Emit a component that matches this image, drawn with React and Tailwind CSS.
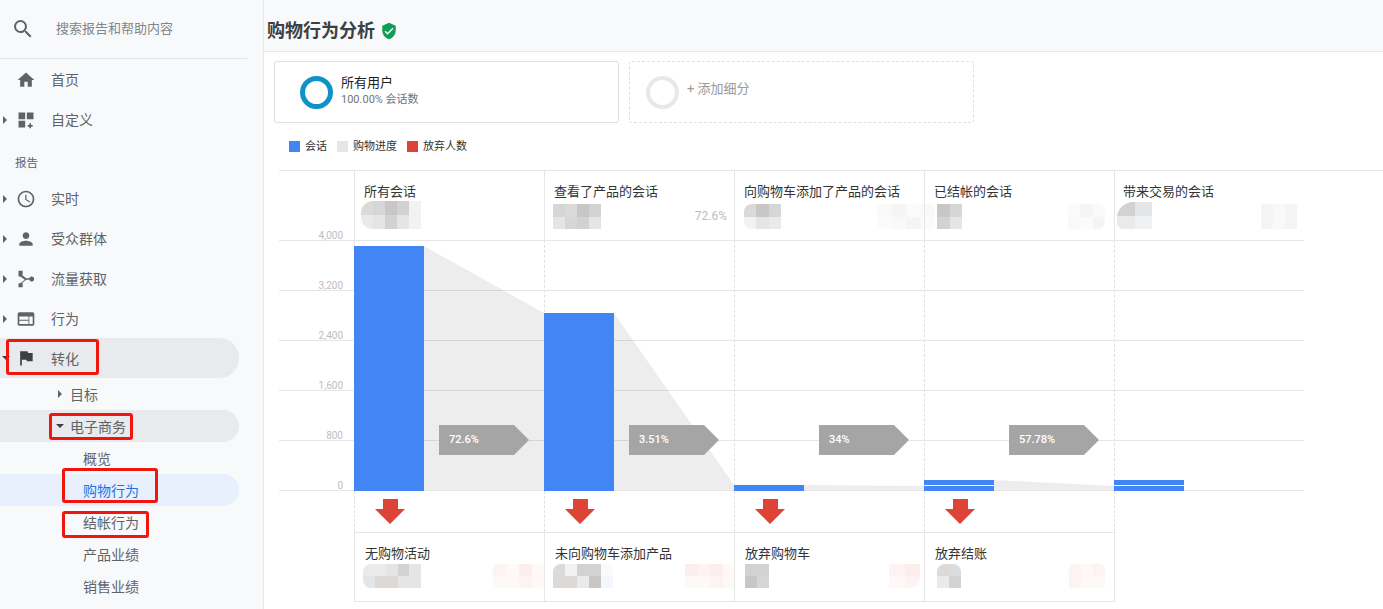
const fontStack = "font-['Roboto','Noto_Sans_CJK_SC',sans-serif]";

function Icon({d, className = "w-5 h-5 text-[#5f6368]"}) {
    return (
        <svg viewBox="0 0 24 24" className={className} fill="currentColor">
            <path d={d}/>
        </svg>
    );
}

const icons = {
    search: "M15.5 14h-.79l-.28-.27A6.47 6.47 0 0 0 16 9.5 6.5 6.5 0 1 0 9.5 16c1.61 0 3.09-.59 4.23-1.57l.27.28v.79l5 4.99L20.49 19l-4.99-5zm-6 0C7.01 14 5 11.99 5 9.5S7.01 5 9.5 5 14 7.01 14 9.5 11.99 14 9.5 14z",
    home: "M10 20v-6h4v6h5v-8h3L12 3 2 12h3v8z",
    custom: "M3 3h8v8H3zm10 0h8v8h-8zM3 13h8v8H3zm15 3h-2v2h-2v2h2v2h2v-2h2v-2h-2z",
    clock: "M11.99 2C6.47 2 2 6.48 2 12s4.47 10 9.99 10C17.52 22 22 17.52 22 12S17.52 2 11.99 2zM12 20c-4.42 0-8-3.58-8-8s3.58-8 8-8 8 3.58 8 8-3.58 8-8 8zm.5-13H11v6l5.25 3.15.75-1.23-4.5-2.67z",
    person: "M12 12c2.21 0 4-1.79 4-4s-1.79-4-4-4-4 1.79-4 4 1.79 4 4 4zm0 2c-2.67 0-8 1.34-8 4v2h16v-2c0-2.66-5.33-4-8-4z",
    acquisition: "M3 2h5v5H6.9l5.3 4H16a3 3 0 1 1 0 2h-3.8l-5.3 4H8v5H3v-5h2.2l5.3-4-5.3-4H3z",
    web: "M20 4H4c-1.1 0-1.99.9-1.99 2L2 18c0 1.1.9 2 2 2h16c1.1 0 2-.9 2-2V6c0-1.1-.9-2-2-2zm-5 14H4v-4h11v4zm0-5H4V9h11v4zm5 5h-4V9h4v9z",
    flag: "M14.4 6L14 4H5v17h2v-7h5.6l.4 2h7V6z",
    shield: "M12 1L3 5v6c0 5.55 3.84 10.74 9 12 5.16-1.26 9-6.45 9-12V5l-9-4zm-2 16l-4-4 1.41-1.41L10 14.17l6.59-6.59L18 9l-8 8z",
};

function CaretRight({className = "text-[#5f6368]"}) {
    return <span className={"block w-0 h-0 border-y-[4px] border-y-transparent border-l-[4px] border-l-current " + className}/>;
}

function CaretDown() {
    return <span className="block w-0 h-0 border-x-[4px] border-x-transparent border-t-[4px] border-t-[#3c4043]"/>;
}

function RedBox({className}) {
    return <div className={"absolute border-[3px] border-[#f0160e] rounded-[3px] pointer-events-none " + className}/>;
}

function TopItem({icon, label, caret = true}) {
    return (
        <div className="h-10 flex items-center">
            <div className="w-[16px] pl-[3px]">{caret && <CaretRight/>}</div>
            <Icon d={icon}/>
            <span className="ml-[15px] text-[14px] leading-4 text-[#5f6368]">{label}</span>
        </div>
    );
}

function Sidebar() {
    return (
        <div className="w-[263px] shrink-0 h-full bg-[#f8f9fb]">
            <div className="w-[247px] h-[59px] border-b border-[#e3e5e8] flex items-center pb-px">
                <Icon d={icons.search} className="ml-[11px] w-6 h-6 text-[#5f6368]"/>
                <span className="ml-[21px] text-[13px] text-[#80868b]">搜索报告和帮助内容</span>
            </div>
            <div className="pt-px">
                <TopItem icon={icons.home} label="首页" caret={false}/>
                <TopItem icon={icons.custom} label="自定义"/>
                <div className="h-[39px] pl-[15px] pt-[15px] text-[11.5px] leading-[16px] text-[#5f6368]">报告</div>
                <TopItem icon={icons.clock} label="实时"/>
                <TopItem icon={icons.person} label="受众群体"/>
                <TopItem icon={icons.acquisition} label="流量获取"/>
                <TopItem icon={icons.web} label="行为"/>
                <div className="relative -mt-px h-10 w-[239px] rounded-r-[20px] bg-[#e8eaed] flex items-center">
                    <div className="w-[16px] pl-[2px]"><CaretDown/></div>
                    <Icon d={icons.flag} className="w-5 h-5 text-[#3c4043]"/>
                    <span className="ml-[15px] pt-[2px] text-[14px] text-[#5f6368]">转化</span>
                    <RedBox className="left-[6px] top-[1px] w-[93px] h-[36px]"/>
                </div>
                <div className="h-8 flex items-center pl-[58px]">
                    <CaretRight/>
                    <span className="ml-[8px] pt-[2px] text-[14px] text-[#5f6368]">目标</span>
                </div>
                <div className="relative h-8 w-[239px] rounded-r-[16px] bg-[#e8eaed] flex items-center pl-[56px]">
                    <CaretDown/>
                    <span className="ml-[6px] pt-[2px] text-[14px] text-[#5f6368]">电子商务</span>
                    <RedBox className="left-[49px] top-[3px] w-[84px] h-[27px]"/>
                </div>
                <div className="h-8 flex items-center pl-[83px] pt-[2px] text-[14px] text-[#5f6368]">概览</div>
                <div className="relative h-8 w-[239px] rounded-r-[16px] bg-[#e8f0fe] flex items-center pl-[83px] pt-[2px] text-[14px] text-[#1a73e8]">
                    购物行为
                    <RedBox className="left-[62px] top-[-6px] w-[96px] h-[35px]"/>
                </div>
                <div className="relative h-8 flex items-center pl-[83px] pt-[2px] text-[14px] text-[#5f6368]">
                    结帐行为
                    <RedBox className="left-[62px] top-[5px] w-[87px] h-[27px]"/>
                </div>
                <div className="h-8 flex items-center pl-[83px] pt-[2px] text-[14px] text-[#5f6368]">产品业绩</div>
                <div className="h-8 flex items-center pl-[83px] pt-[2px] text-[14px] text-[#5f6368]">销售业绩</div>
            </div>
        </div>
    );
}

function Segments() {
    return (
        <div className="flex gap-[10px] pt-[9px] pl-[10px]">
            <div className="w-[345px] h-[62px] border border-[#e0e0e0] rounded-[3px] flex items-center pl-[25px]">
                <div className="w-[33px] h-[33px] rounded-full border-[5px] border-[#0f93c7]"/>
                <div className="ml-[8px] -mt-[3px]">
                    <div className="text-[13px] leading-[16px] text-[#212121]">所有用户</div>
                    <div className="text-[11px] leading-[15px] mt-px text-[#757575]">100.00% 会话数</div>
                </div>
            </div>
            <div className="w-[345px] h-[62px] border border-dashed border-[#e0e0e0] rounded-[3px] flex items-center pl-[16px]">
                <div className="w-[33px] h-[33px] rounded-full border-[4px] border-[#e8e8e8]"/>
                <span className="ml-[8px] -mt-[6px] text-[13px] text-[#9a9a9a]">+ 添加细分</span>
            </div>
        </div>
    );
}

function Legend() {
    return (
        <div className="flex items-center mt-[18px] ml-[25px] h-[11px] text-[11px] text-[#333]">
            <div className="w-[11px] h-[11px] bg-[#4285f4]"/>
            <span className="ml-[5px] w-[32px] pt-[2px]">会话</span>
            <div className="w-[11px] h-[11px] bg-[#e6e6e6]"/>
            <span className="ml-[5px] w-[54px] pt-[2px]">购物进度</span>
            <div className="w-[11px] h-[11px] bg-[#dd4437]"/>
            <span className="ml-[5px] pt-[2px]">放弃人数</span>
        </div>
    );
}

function Mosaic({cells, className}) {
    return (
        <div className={"grid shrink-0 overflow-hidden " + className}>
            {cells.map((c, i) => <div key={i} className={c}/>)}
        </div>
    );
}

const g1 = "bg-[#dcd9d7]", g2 = "bg-[#d5d6d8]", g3 = "bg-[#c9c7c6]", g4 = "bg-[#d2d2d3]", g5 = "bg-[#eaeaea]", g6 = "bg-[#e4e5e6]", g7 = "bg-[#f2f2f2]";
const f1 = "bg-[#f9f9f9]", f2 = "bg-[#f5f5f5]", f3 = "bg-[#fbfbfb]";
const p1 = "bg-[#fdf3f2]", p2 = "bg-[#fbeeec]", p3 = "bg-[#fef8f7]";

function FunnelChart() {
    const gridLines = [0, 50, 100, 150, 200, 250];
    return (
        <svg viewBox="0 0 1025 251" className="absolute left-0 top-0 w-[1025px] h-[251px]">
            {gridLines.map(y => <rect key={y} x="0" y={y} width="1025" height="1" fill="#e6e6e6"/>)}
            <g fill="#000000" fillOpacity="0.07">
                <polygon points="145,6 265,73 265,250 145,250"/>
                <polygon points="335,73 455,245 455,250 335,250"/>
                <polygon points="525,245 645,246 645,250 525,250"/>
                <polygon points="715,240 835,246 835,250 715,250"/>
            </g>
            <g fill="#4285f4">
                <rect x="75" y="6" width="70" height="245"/>
                <rect x="265" y="73" width="70" height="178"/>
                <rect x="455" y="245" width="70" height="6"/>
                <rect x="645" y="240" width="70" height="5"/>
                <rect x="645" y="246" width="70" height="5"/>
                <rect x="835" y="240" width="70" height="5"/>
                <rect x="835" y="246" width="70" height="5"/>
            </g>
        </svg>
    );
}

function RateChip({value}) {
    return (
        <div className="relative mt-[185px] ml-[84px] w-[90px] h-[30px] bg-[#a5a5a5] [clip-path:polygon(0_0,75px_0,100%_50%,75px_100%,0_100%)] flex items-center pl-[10px] text-[11px] font-medium text-white">
            {value}
        </div>
    );
}

function DropArrow() {
    return (
        <svg viewBox="0 0 30 25" className="w-[30px] h-[25px]">
            <polygon points="8,0 23,0 23,10 30,10 15,25 0,10 8,10" fill="#dd4437"/>
        </svg>
    );
}

function Axis() {
    return (
        <div className="pr-[11px] text-right text-[10px] text-[#bdbdbd]">
            {["4,000", "3,200", "2,400", "1,600", "800", "0"].map((label, i) => (
                <div key={label} className={i === 0 ? "h-0 -translate-y-[10px] leading-[12px]" : "h-[50px] leading-[12px] pt-[40px]"}>{label}</div>
            ))}
        </div>
    );
}

const cols = "grid grid-cols-[75px_repeat(5,190px)] w-[1025px]";

function Chart() {
    return (
        <div className={"mt-[18px] ml-[15px] border-t border-[#e6e6e6] " + fontStack}>
            <div className={cols + " h-[69px]"}>
                <div/>
                <div className="border-l border-[#e6e6e6]">
                    <div className="ml-[9px] mt-[13px] text-[13px] leading-4 text-[#333]">所有会话</div>
                    <div className="flex mt-px">
                        <Mosaic className="ml-[6px] w-[60px] h-[28px] grid-cols-5 rounded-l-[12px]" cells={[g1, g2, g3, g4, g7, g5, g6, g4, g6, g7]}/>
                    </div>
                </div>
                <div className="border-l border-[#e6e6e6]">
                    <div className="ml-[9px] mt-[13px] text-[13px] leading-4 text-[#333]">查看了产品的会话</div>
                    <div className="flex items-center mt-[4px]">
                        <Mosaic className="ml-[8px] w-[48px] h-[25px] grid-cols-4" cells={[g2, g1, g3, g4, g6, g2, g4, g6]}/>
                        <span className="ml-auto mr-[7px] -mt-[2px] text-[12px] text-[#bdbdbd]">72.6%</span>
                    </div>
                </div>
                <div className="border-l border-[#e6e6e6]">
                    <div className="ml-[9px] mt-[13px] text-[13px] leading-4 text-[#333]">向购物车添加了产品的会话</div>
                    <div className="flex mt-[4px]">
                        <Mosaic className="ml-[9px] w-[37px] h-[25px] grid-cols-3 rounded-l-[8px]" cells={[g1, g3, g2, g7, g6, g5]}/>
                        <Mosaic className="ml-[96px] w-[58px] h-[25px] grid-cols-4 rounded-[6px]" cells={[f1, f2, f3, f1, f3, f1, f2, f3]}/>
                    </div>
                </div>
                <div className="border-l border-[#e6e6e6]">
                    <div className="ml-[9px] mt-[13px] text-[13px] leading-4 text-[#333]">已结帐的会话</div>
                    <div className="flex mt-[4px]">
                        <Mosaic className="ml-[12px] w-[25px] h-[25px] grid-cols-2" cells={[g3, g2, g4, g6]}/>
                        <Mosaic className="ml-[106px] w-[37px] h-[25px] grid-cols-3 rounded-r-[8px]" cells={[f3, f2, f1, f1, f3, f2]}/>
                    </div>
                </div>
                <div className="border-l border-[#e6e6e6]">
                    <div className="ml-[8px] mt-[13px] text-[13px] leading-4 text-[#333]">带来交易的会话</div>
                    <div className="flex mt-[2px]">
                        <Mosaic className="ml-[2px] w-[35px] h-[27px] grid-cols-2 rounded-tl-[16px] rounded-bl-[6px]" cells={[g4, g6, g5, "bg-[#eff1f3]"]}/>
                        <Mosaic className="ml-[109px] mt-[2px] w-[36px] h-[25px] grid-cols-3" cells={[f2, f1, f2, f2, f1, f2]}/>
                    </div>
                </div>
            </div>
            <div className={"relative h-[251px] " + cols}>
                <FunnelChart/>
                <Axis/>
                {["72.6%", "3.51%", "34%", "57.78%", null].map((rate, i) => (
                    <div key={i} className="border-l border-dashed border-[#e0e0e0]">
                        {rate && <RateChip value={rate}/>}
                    </div>
                ))}
            </div>
            <div className={cols + " h-[41px]"}>
                <div/>
                {[0, 1, 2, 3].map(i => (
                    <div key={i} className="border-l border-dashed border-[#e0e0e0] pl-[20px] pt-[8px]">
                        <DropArrow/>
                    </div>
                ))}
                <div className="border-l border-dashed border-[#e0e0e0]"/>
            </div>
            <div className="grid grid-cols-[75px_repeat(3,190px)_191px] w-[836px] h-[70px]">
                <div/>
                <div className="border-l border-t border-b border-[#e6e6e6]">
                    <div className="ml-[10px] mt-[13px] text-[13px] leading-4 text-[#333]">无购物活动</div>
                    <div className="flex mt-[2px]">
                        <Mosaic className="ml-[8px] w-[58px] h-[24px] grid-cols-5 rounded-l-[8px]" cells={[g5, g5, g6, g4, g6, g6, g1, g1, g6, g6]}/>
                        <Mosaic className="ml-[72px] w-[52px] h-[24px] grid-cols-4 rounded-[6px]" cells={[p1, p3, p2, p3, p3, p3, p1, p3]}/>
                    </div>
                </div>
                <div className="border-l border-t border-b border-[#e6e6e6]">
                    <div className="ml-[10px] mt-[13px] text-[13px] leading-4 text-[#333]">未向购物车添加产品</div>
                    <div className="flex mt-[2px]">
                        <Mosaic className="ml-[8px] w-[60px] h-[24px] grid-cols-5 rounded-tl-[8px]" cells={[g1, g7, g4, g4, "bg-[#f8fbfe]", g1, g1, g5, g3, "bg-[#f3f7fb]"]}/>
                        <Mosaic className="ml-[72px] w-[50px] h-[24px] grid-cols-4 rounded-tr-[10px]" cells={[p2, p1, p2, p3, p3, p3, p1, p3]}/>
                    </div>
                </div>
                <div className="border-l border-t border-b border-[#e6e6e6]">
                    <div className="ml-[10px] mt-[13px] text-[13px] leading-4 text-[#333]">放弃购物车</div>
                    <div className="flex mt-[2px]">
                        <Mosaic className="ml-[10px] w-[24px] h-[24px] grid-cols-2" cells={[g4, g4, g3, "bg-[#d5d6d5]"]}/>
                        <Mosaic className="ml-[120px] w-[31px] h-[24px] grid-cols-2 rounded-br-[10px]" cells={[p1, p2, p3, p1]}/>
                    </div>
                </div>
                <div className="border-x border-t border-b border-[#e6e6e6]">
                    <div className="ml-[10px] mt-[13px] text-[13px] leading-4 text-[#333]">放弃结账</div>
                    <div className="flex mt-[2px]">
                        <Mosaic className="ml-[12px] w-[24px] h-[24px] grid-cols-2 rounded-t-[8px]" cells={[g1, "bg-[#dadde0]", g5, g4]}/>
                        <Mosaic className="ml-[108px] w-[36px] h-[24px] grid-cols-3 rounded-t-[6px]" cells={[p1, p3, p1, p1, p3, p3]}/>
                    </div>
                </div>
            </div>
        </div>
    );
}

export default function App() {
    return (
        <div className={"flex w-[1383px] h-[609px] overflow-hidden bg-white " + fontStack}>
            <Sidebar/>
            <div className="flex-1 min-w-0 border-l border-[#e6e8eb]">
                <div className="h-[52px] bg-[#f8f9fb] border-b border-[#e5e7ea] flex items-center pl-[3px] pt-[10px]">
                    <h1 className="text-[18px] font-bold text-[#3c4043]">购物行为分析</h1>
                    <Icon d={icons.shield} className="ml-[5px] w-[18px] h-[18px] text-[#0f9d58]"/>
                </div>
                <Segments/>
                <Legend/>
                <Chart/>
            </div>
        </div>
    );
}
